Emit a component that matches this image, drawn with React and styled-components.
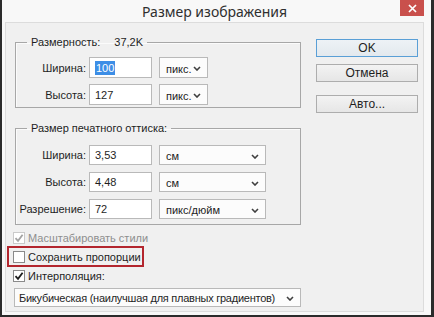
import React from 'react'
import styled, { createGlobalStyle } from 'styled-components'

const GlobalStyle = createGlobalStyle`
  * { box-sizing: border-box; }
  html, body { margin: 0; padding: 0; background: #ffffff; }
  body {
    font-family: "Liberation Sans", Arial, sans-serif;
    font-size: 11px;
    color: #1e1e1e;
  }
`

function Chevron() {
  return (
    <svg width="8" height="5" viewBox="0 0 8 5">
      <path d="M1 1 L4 4 L7 1" fill="none" stroke="#3f3f3f" strokeWidth="1.6" />
    </svg>
  )
}

function CheckMark({ color }) {
  return (
    <svg width="10" height="10" viewBox="0 0 10 10">
      <path d="M1.5 5.2 L4 7.8 L8.6 1.8" fill="none" stroke={color} strokeWidth="1.8" />
    </svg>
  )
}

function Field({ label, value, selected, unit, unitWidth, height }) {
  return (
    <Row h={height}>
      <Label>{label}</Label>
      <Input>{selected ? <Selected>{value}</Selected> : value}</Input>
      <Select w={unitWidth}>
        <span>{unit}</span>
        <Chevron />
      </Select>
    </Row>
  )
}

function Check({ text, checked, disabled, highlighted }) {
  return (
    <CheckRow highlighted={highlighted} disabled={disabled}>
      <Box disabled={disabled}>
        {checked && <CheckMark color={disabled ? '#a3a3a3' : '#1c1c1c'} />}
      </Box>
      <span>{text}</span>
    </CheckRow>
  )
}

export default function App() {
  return (
    <>
      <GlobalStyle />
      <Window>
        <TitleBar>
          <span />
          <Title>Размер изображения</Title>
          <Close>
            <svg width="9" height="9" viewBox="0 0 9 9">
              <path d="M1 1 L8 8 M8 1 L1 8" stroke="#ffffff" strokeWidth="1.7" />
            </svg>
          </Close>
        </TitleBar>
        <Body>
          <LeftColumn>
            <Group>
              <Legend>
                <span>Размерность:</span>
                <span>37,2K</span>
              </Legend>
              <Rows top={8} bottom={2} gap={6}>
                <Field label="Ширина:" value="100" selected unit="пикс." unitWidth={49} height={21} />
                <Field label="Высота:" value="127" unit="пикс." unitWidth={49} height={21} />
              </Rows>
            </Group>
            <Group spaced>
              <Legend>
                <span>Размер печатного оттиска:</span>
              </Legend>
              <Rows top={10} bottom={5} gap={7}>
                <Field label="Ширина:" value="3,53" unit="см" unitWidth={107} height={20} />
                <Field label="Высота:" value="4,48" unit="см" unitWidth={107} height={20} />
                <Field label="Разрешение:" value="72" unit="пикс/дюйм" unitWidth={107} height={20} />
              </Rows>
            </Group>
            <Checks>
              <Check text="Масштабировать стили" checked disabled />
              <Check text="Сохранить пропорции" highlighted />
              <Check text="Интерполяция:" checked />
            </Checks>
            <WideSelect>
              <WideText>Бикубическая (наилучшая для плавных градиентов)</WideText>
              <Chevron />
            </WideSelect>
          </LeftColumn>
          <Buttons>
            <Button primary>OK</Button>
            <Button>Отмена</Button>
            <Button spaced>Авто...</Button>
          </Buttons>
        </Body>
      </Window>
    </>
  )
}

const Window = styled.div`
  width: 434px;
  height: 317px;
  display: flex;
  flex-direction: column;
  background: #f8f8f8;
  border-left: 2px solid #2b2b2b;
  border-right: 3px solid #2b2b2b;
  border-bottom: 2px solid #2b2b2b;
  padding: 0 7px 3px 3px;
`

const TitleBar = styled.div`
  height: 22px;
  display: grid;
  grid-template-columns: 1fr auto 1fr;
  align-items: start;
`

const Title = styled.div`
  font-family: "Noto Sans", "Open Sans", sans-serif;
  font-size: 14px;
  line-height: 22px;
  color: #2f2f2f;
  margin-top: 1px;
`

const Close = styled.div`
  justify-self: end;
  width: 24px;
  height: 16px;
  background: #c9504c;
  display: flex;
  align-items: center;
  justify-content: center;
`

const Body = styled.div`
  flex: 1;
  display: flex;
  gap: 15px;
  background: #f0f0f0;
  border: 1px solid #dcdcdc;
  padding: 12px 5px 0 9px;
`

const LeftColumn = styled.div`
  width: 286px;
  display: flex;
  flex-direction: column;
`

const Group = styled.fieldset`
  margin: ${p => (p.spaced ? '13px' : '0')} 0 0 0;
  padding: 0;
  border: 1px solid #a7a7a7;
  box-shadow: inset 1px 1px 0 #fbfbfb;
  min-width: 0;
`

const Legend = styled.legend`
  margin-left: 11px;
  padding: 0 4px;
  line-height: 14px;
  display: flex;
  gap: 14px;
`

const Rows = styled.div`
  display: flex;
  flex-direction: column;
  gap: ${p => p.gap}px;
  padding: ${p => p.top}px 0 ${p => p.bottom}px 0;
`

const Row = styled.div`
  display: flex;
  align-items: stretch;
  height: ${p => p.h}px;
`

const Label = styled.div`
  width: 70px;
  display: flex;
  align-items: center;
  justify-content: flex-end;
`

const Input = styled.div`
  width: 63px;
  margin-left: 3px;
  background: #ffffff;
  border: 1px solid #b9b9b9;
  display: flex;
  align-items: center;
  padding-left: 5px;
`

const Selected = styled.span`
  background: #3d8ee6;
  color: #ffffff;
  padding: 1px 1px;
`

const Select = styled.div`
  width: ${p => p.w}px;
  margin-left: 7px;
  background: #fcfcfc;
  border: 1px solid #b9b9b9;
  display: flex;
  align-items: center;
  justify-content: space-between;
  padding: 2px 6px 0 6px;
`

const Checks = styled.div`
  display: flex;
  flex-direction: column;
  margin-top: 3px;
`

const CheckRow = styled.div`
  display: flex;
  align-items: center;
  gap: 3px;
  width: fit-content;
  height: 19px;
  margin-left: -7px;
  padding: 0 2px 0 5px;
  color: ${p => (p.disabled ? '#8e8e8e' : '#1e1e1e')};
  outline: ${p => (p.highlighted ? '2px solid #b3262e' : 'none')};
  outline-offset: -1px;
`

const Box = styled.div`
  width: 12px;
  height: 12px;
  background: #ffffff;
  border: 1px solid ${p => (p.disabled ? '#cacaca' : '#8a8a8a')};
  display: flex;
  align-items: center;
  justify-content: center;
`

const WideSelect = styled.div`
  margin-top: 3px;
  margin-left: -1px;
  height: 19px;
  background: #fcfcfc;
  border: 1px solid #b9b9b9;
  display: flex;
  align-items: center;
  justify-content: space-between;
  padding: 1px 6px 0 4px;
`

const WideText = styled.span`
  white-space: nowrap;
  letter-spacing: -0.25px;
`

const Buttons = styled.div`
  width: 102px;
  display: flex;
  flex-direction: column;
  gap: 7px;
  padding-top: 4px;
`

const Button = styled.div`
  height: 18px;
  margin-top: ${p => (p.spaced ? '6px' : '0')};
  border: 1px solid ${p => (p.primary ? '#5a9fd6' : '#adadad')};
  background: ${p => (p.primary ? 'linear-gradient(#edf2f6, #e3e9ee)' : 'linear-gradient(#f3f3f3, #e6e6e6)')};
  display: flex;
  align-items: center;
  justify-content: center;
  font-size: 12px;
`
